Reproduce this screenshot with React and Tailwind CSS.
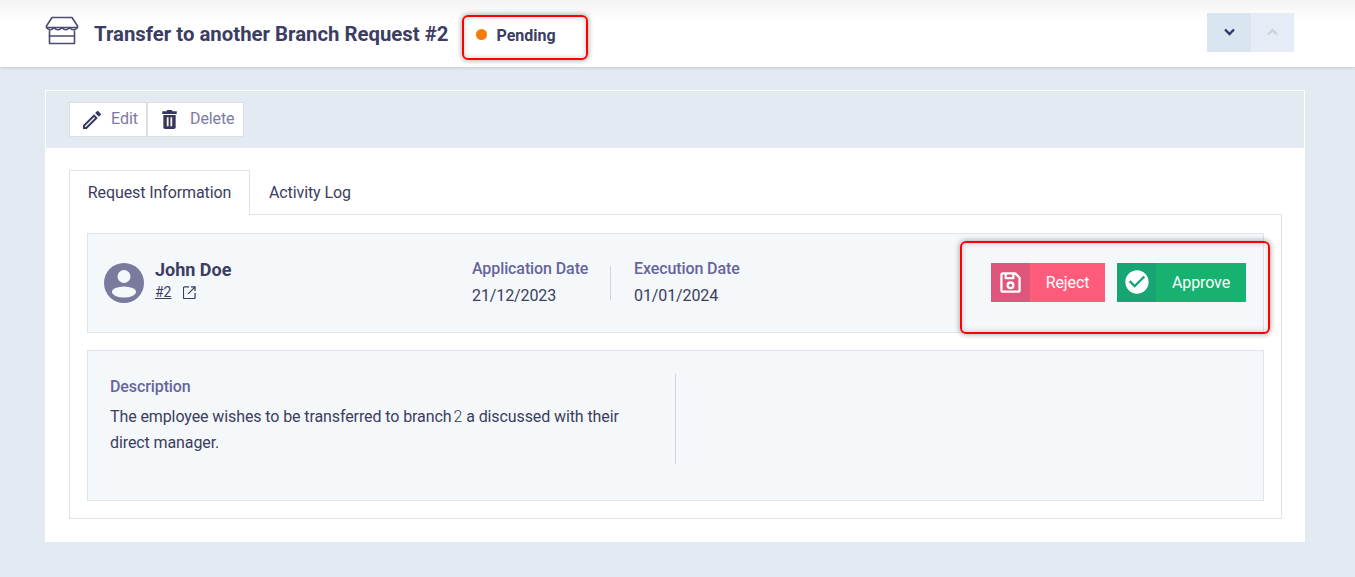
import React from 'react';
import { MdOutlineEdit, MdCheckCircle } from 'react-icons/md';

const StoreIcon = () => (
    <svg width="34" height="30" viewBox="0 0 34 30" fill="none" stroke="#4a4c70" strokeWidth="1.6" strokeLinejoin="round" strokeLinecap="round">
        <path d="M7 1.500h20l5.500 8.500v1.500h-31V10z" />
        <path d="M1.500 11.500c2.500 3 5 3 7.500 0c2.500 3 5.500 3 8 0c2.500 3 5 3 7.500 0c2.500 3 5.500 3 8 0" />
        <path d="M4.500 15v12.500h25V15" />
        <path d="M4.500 20h25" />
    </svg>
);

const TrashIcon = () => (
    <svg width="15" height="19" viewBox="0 0 16 21">
        <path d="M5.500 0h5l.8 1.500H16v2.800H0V1.500h4.700z" fill="#34375f" />
        <path d="M1.200 5.500h13.600V19a2 2 0 0 1-2 2H3.200a2 2 0 0 1-2-2z" fill="#34375f" />
        <rect x="5" y="8" width="2" height="10" fill="#fff4d6" />
        <rect x="9" y="8" width="2" height="10" fill="#fff4d6" />
    </svg>
);

const SaveIcon = () => (
    <svg width="21" height="21" viewBox="0 0 22 22" fill="none" stroke="#fff" strokeWidth="2.400" strokeLinejoin="round">
        <path d="M3 1.500h13l4.500 4.500v13a1.500 1.500 0 0 1-1.500 1.500H3A1.500 1.500 0 0 1 1.500 19V3A1.500 1.500 0 0 1 3 1.500z" />
        <path d="M6 1.500v5h8v-5" />
        <circle cx="11" cy="14" r="3" />
    </svg>
);

const AvatarIcon = () => (
    <svg width="40" height="40" viewBox="0 0 40 40" className="shrink-0">
        <circle cx="20" cy="20" r="20" fill="#7a7a9f" />
        <circle cx="20" cy="13.500" r="6.500" fill="#f5f8fb" />
        <ellipse cx="20" cy="29" rx="12" ry="5.500" fill="#f5f8fb" />
    </svg>
);

const ExternalIcon = () => (
    <svg width="13" height="13" viewBox="0 0 14 14" fill="none" stroke="#3b3d5e" strokeWidth="1.300">
        <path d="M6.500 1H1.500a1 1 0 0 0-1 1V12.500a1 1 0 0 0 1 1H12a1 1 0 0 0 1-1V7.500" />
        <path d="M5.500 8.500L12.500 1.500M8.500 1H13V5.500" />
    </svg>
);

const Chevron = ({ up, color }) => (
    <svg width="11" height="8" viewBox="0 0 11 8" fill="none" stroke={color} strokeWidth="2.400">
        <path d={up ? 'M1 6.500L5.500 2L10 6.500' : 'M1 1.500L5.500 6L10 1.500'} />
    </svg>
);

const Annotation = ({ className }) => (
    <div className={`absolute border-2 border-[#f00] rounded-md shadow-[0_0_5px_1px_rgba(0,0,0,0.3),inset_0_0_5px_1px_rgba(0,0,0,0.15)] pointer-events-none ${className}`} />
);

const ActionButton = ({ icon, label, iconBg, bg, width }) => (
    <button className={`flex items-stretch h-[39px] text-white text-[16px] tracking-[-0.1px] ${bg} ${width}`}>
        <span className={`w-[39px] shrink-0 flex items-center justify-center ${iconBg}`}>{icon}</span>
        <span className="flex-1 flex items-center justify-center pt-[1px]">{label}</span>
    </button>
);

const App = () => {
    return (
        <div className="relative h-[577px] bg-[#e3eaf2] overflow-hidden font-['Roboto',sans-serif] text-[#3b3d5e]">
            {/* Header */}
            <header className="h-[67px] bg-gradient-to-b from-[#f3f3f3] to-white to-[30%] shadow-[0_1px_3px_rgba(0,0,0,0.15)] flex items-center pl-[45px] pr-[61px]">
                <div className="flex items-center flex-1">
                    <span className="-mt-[5px]"><StoreIcon /></span>
                    <h1 className="ml-[15px] mt-[1px] text-[20.35px] font-bold text-[#3b3d63] leading-none">Transfer to another Branch Request #2</h1>
                    <span className="ml-[28px] mt-[2px] w-[11px] h-[11px] rounded-full bg-[#f57c0a]" />
                    <span className="ml-[9px] mt-[4px] text-[16px] font-bold text-[#3b3d63]">Pending</span>
                </div>
                <div className="flex -mt-[3px]">
                    <button className="w-[44px] h-[39px] bg-[#d9e5f1] flex items-center justify-center"><Chevron color="#2f3a6b" /></button>
                    <button className="w-[43px] h-[39px] bg-[#e5ecf5] flex items-center justify-center"><Chevron up color="#cfd3d8" /></button>
                </div>
            </header>

            {/* Card */}
            <main className="ml-[45px] mt-[23px] w-[1260px] h-[452px] bg-white">
                <div className="h-[58px] bg-[#e3eaf2] border border-white border-b-0 pl-[23px] pt-[11px] flex items-start">
                    <button className="h-[35px] w-[78px] bg-white border border-[#dcdfe3] flex items-center pl-[10px] pb-[2px] text-[16px] text-[#7b7b9d]">
                        <MdOutlineEdit size={24} className="text-[#34375f] mt-[2px]" />
                        <span className="ml-[7px]">Edit</span>
                    </button>
                    <button className="h-[35px] w-[97px] bg-white border border-[#dcdfe3] flex items-center pl-[14px] pb-[2px] text-[16px] text-[#7b7b9d]">
                        <span className="mt-[2px] flex"><TrashIcon /></span>
                        <span className="ml-[13px] tracking-[-0.1px]">Delete</span>
                    </button>
                </div>

                <div className="ml-[24px] mt-[22px] w-[1213px]">
                    {/* Tabs */}
                    <div className="flex h-[45px] text-[16px] tracking-[-0.1px] text-[#3b3d5e]">
                        <div className="w-[181px] border border-[#dfe2e6] border-b-0 flex items-center justify-center">Request Information</div>
                        <div className="flex-1 border-b border-[#dfe2e6] flex items-center pl-[19px] pt-[1px]">Activity Log</div>
                    </div>

                    {/* Panel */}
                    <div className="h-[304px] border border-t-0 border-[#dfe2e6] px-[17px] pt-[18px]">
                        <div className="h-[100px] bg-[#f5f8fb] border border-[#dfe4ea] flex items-center pl-[16px] pr-[17px]">
                            <AvatarIcon />
                            <div className="ml-[11px] w-[317px] -mt-[5px]">
                                <div className="text-[18px] font-bold leading-[22px] text-[#3b3d63]">John Doe</div>
                                <div className="flex items-center mt-[1px] text-[14px]">
                                    <span className="underline">#2</span>
                                    <span className="ml-[11px] flex"><ExternalIcon /></span>
                                </div>
                            </div>
                            <div className="w-[139px] -mt-[1px] tracking-[-0.1px]">
                                <div className="text-[16px] font-medium text-[#65659b] leading-[24px]">Application Date</div>
                                <div className="text-[16px] leading-[24px] mt-[3px]">21/12/2023</div>
                            </div>
                            <div className="w-px h-[34px] bg-[#cfd4da] -ml-[1px]" />
                            <div className="ml-[23px] -mt-[1px] tracking-[-0.1px]">
                                <div className="text-[16px] font-medium text-[#65659b] leading-[24px]">Execution Date</div>
                                <div className="text-[16px] leading-[24px] mt-[3px]">01/01/2024</div>
                            </div>
                            <div className="ml-auto -mt-[2px] flex gap-[12px]">
                                <ActionButton
                                    icon={<SaveIcon />}
                                    label="Reject"
                                    bg="bg-[#ff5c7c]"
                                    iconBg="bg-[#e0557c]"
                                    width="w-[114px]"
                                />
                                <ActionButton
                                    icon={<MdCheckCircle size={28} />}
                                    label="Approve"
                                    bg="bg-[#17b26f]"
                                    iconBg="bg-[#17a673]"
                                    width="w-[129px]"
                                />
                            </div>
                        </div>

                        <div className="mt-[17px] h-[151px] bg-[#f5f8fb] border border-[#dfe4ea] pl-[22px] pt-[23px] flex items-start">
                            <div className="w-[566px] h-[90px] border-r border-[#cfd4da] text-[16px] tracking-[-0.1px]">
                                <div className="font-medium text-[#65659b] leading-[24px] mt-[1px]">Description</div>
                                <div className="leading-[26px] mt-[5px] text-[#3b3d5e]">
                                    <div>
                                        <span>The employee wishes to be transferred to branch</span>
                                        <span className="font-light ml-[2px]">2</span>
                                        <span className="ml-[4px]">a discussed with their</span>
                                    </div>
                                    <div>direct manager.</div>
                                </div>
                            </div>
                        </div>
                    </div>
                </div>
            </main>

            {/* Highlight boxes */}
            <Annotation className="left-[462px] top-[15px] w-[126px] h-[45px]" />
            <Annotation className="left-[960px] top-[241px] w-[310px] h-[93px]" />
        </div>
    );
};

export default App;
